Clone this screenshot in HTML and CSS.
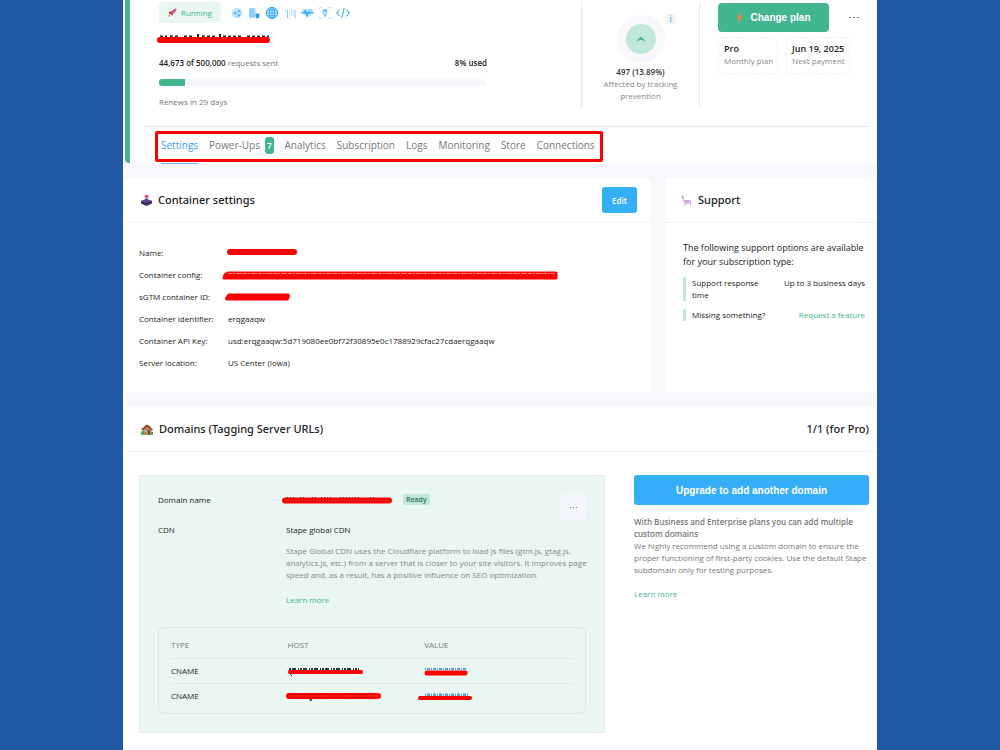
FILE: index.html
```
<!DOCTYPE html>
<html lang="en">
<head>
	<title>Container settings</title>
	<meta charset="utf-8">
	<meta name="viewport" content="width=device-width, initial-scale=1">

	<link rel="stylesheet" href="styles.css">
</head>
<body>

	<div class="page">
		<header class="summary">
			<div class="overview">
				<div class="usage">
					<div class="status-row">
						<span class="status">
							<svg width="9" height="9" viewBox="0 0 9 9"><path d="M2 5L6 1l2.5-.5L8 3 4 7z" fill="#e0567a"/><path d="M1 4l2-1 1 2 1 1-1 2-1-2-2 0z" fill="#d3365f"/><circle cx="6.3" cy="2.6" r=".9" fill="#5b6fb5"/><path d="M0 9l1-3 2 2z" fill="#f0a04b"/></svg>
							Running
						</span>
						<div class="features">
							<svg width="12" height="12" viewBox="0 0 12 12"><circle cx="6" cy="6" r="5.3" fill="#b9e1fc"/><path d="M4 6l4-2M4 6l4 2.500" stroke="#6cc0f8" stroke-width=".6"/><circle cx="4" cy="6" r="1" fill="#37aef8"/><circle cx="8" cy="4" r="1" fill="#37aef8"/><circle cx="8" cy="8.500" r="1" fill="#37aef8"/></svg>
							<svg width="12" height="12" viewBox="0 0 12 12"><rect x="1" y="1" width="6.500" height="10" fill="#a6d9fb"/><path d="M2 3h4M2 5h4M2 7h4M2 9h4" stroke="#4db5f7" stroke-dasharray="1 .6"/><path d="M7.500 7l2-.8 2 .8v2q0 2-2 2.700-2-.7-2-2.700z" fill="#249ff0"/></svg>
							<svg width="14" height="14" viewBox="0 0 14 14"><circle cx="7" cy="7" r="5.600" fill="#c9e8fd" stroke="#2aa3f2"/><ellipse cx="7" cy="7" rx="2.600" ry="5.600" fill="none" stroke="#2aa3f2" stroke-width=".8"/><path d="M7 1.400v11.200M1.400 7h11.200M2.300 4.200h9.400M2.300 9.800h9.400" stroke="#2aa3f2" stroke-width=".8"/></svg>
							<svg width="12" height="12" viewBox="0 0 12 12"><path d="M1.500 2v5M5.500 4v8M9 1v8" stroke="#cbe8fc"/><path d="M3.500 3v8M11 3v8" stroke="#7cc8fa"/><path d="M7.500 3v6" stroke="#b9e1fc"/></svg>
							<svg width="13" height="12" viewBox="0 0 13 12"><path d="M6.500 11L1.500 6Q0 2 3.500 1.500q2 0 3 1.600Q8 1 10 1.600 13 3 11.500 6z" fill="#a4d9fb"/><path d="M0 6h3.500l1-2 1.600 4 1.400-3 1 1H13" fill="none" stroke="#279fee" stroke-width="1.100"/></svg>
							<svg width="12" height="12" viewBox="0 0 12 12"><path d="M.5 2.500V.5h2M9.500 .5h2v2M11.500 9.500v2h-2M2.500 11.500h-2v-2" fill="none" stroke="#b9e1fc"/><ellipse cx="6" cy="6" rx="2.400" ry="3" fill="#a4d9fb"/><path d="M3.400 5Q4 2 6 2.300 8.500 2 8.600 5L7 4H5z" fill="#45b1f6"/><path d="M5 8.500h2v1H5z" fill="#45b1f6"/></svg>
							<svg width="14" height="12" viewBox="0 0 14 12"><path d="M4 2.500L.8 6 4 9.500M10 2.500L13.200 6 10 9.500M8.200 1L5.800 11" fill="none" stroke="#45b1f6" stroke-width="1.100"/></svg>
						</div>
					</div>
					<h1>
						<svg class="mark" width="112" height="12" viewBox="0 0 112 12"><path d="M1 4.500h7M11 4.500h9M25 4.500h10M39 2v5M43 4.500h14M61 2v5M64 4.500h18M88 4.500h22" stroke="#222" stroke-width="2" stroke-dasharray="3 2"/><path d="M1 8h107" stroke="#f00" stroke-width="6" stroke-linecap="round"/></svg>
					</h1>
					<div class="usage-row">
						<span><b>44,673 of 500,000</b> requests sent</span>
						<b>8% used</b>
					</div>
					<div class="progress"><div class="progress-value" style="width: 8%"></div></div>
					<div class="renews">Renews in 29 days</div>
				</div>

				<div class="tracking">
					<div class="ring">
						<div class="ring-inner">
							<svg width="10" height="6" viewBox="0 0 10 6"><path d="M0 5.500L5 .5l5 5-5-1.700z" fill="#43b591"/></svg>
						</div>
						<span class="info">i</span>
					</div>
					<b>497 (13.89%)</b>
					<p>Affected by tracking prevention</p>
				</div>

				<div class="plan">
					<div class="plan-actions">
						<button class="change">
							<svg width="7" height="10" viewBox="0 0 7 10"><path d="M4 0L.5 5.500h2.300L1.700 10 6.500 4H4.200L5 0z" fill="#f6823f"/></svg>
							Change plan
						</button>
						<button class="more" aria-label="More">
							<svg width="11" height="3" viewBox="0 0 11 3"><path d="M1 1h2v1H1zM5 1h2v1H5zM9 1h2v1H9z" fill="#777"/></svg>
						</button>
					</div>
					<div class="plan-facts">
						<div class="fact"><strong>Pro</strong><span>Monthly plan</span></div>
						<div class="fact"><strong>Jun 19, 2025</strong><span>Next payment</span></div>
					</div>
				</div>
			</div>

			<nav class="tabs">
				<a class="active" href="#">Settings</a>
				<a href="#">Power-Ups <span class="count">7</span></a>
				<a href="#">Analytics</a>
				<a href="#">Subscription</a>
				<a href="#">Logs</a>
				<a href="#">Monitoring</a>
				<a href="#">Store</a>
				<a href="#">Connections</a>
				<div class="highlight"></div>
			</nav>
		</header>

		<div class="columns">
			<section class="card">
				<div class="card-head">
					<svg width="11" height="12" viewBox="0 0 11 12"><path d="M5 3h1.300v5H5z" fill="#5a4a7c"/><circle cx="5.600" cy="2.300" r="1.900" fill="#ee5077"/><path d="M0 7l5.500-2L11 7v2.500L5.500 12 0 9.500z" fill="#392f61"/><path d="M0 7l5.500-2L11 7 5.500 9z" fill="#5c4b86"/></svg>
					<h2>Container settings</h2>
					<button class="edit">Edit</button>
				</div>
				<dl class="details">
					<dt>Name:</dt>
					<dd><svg class="mark" width="70" height="12" viewBox="0 0 70 12"><path d="M2 5h64" stroke="#f00" stroke-width="6" stroke-linecap="round"/><path d="M2 5h64" stroke="#a33" stroke-dasharray="3 1 2 2"/></svg></dd>
					<dt>Container config:</dt>
					<dd><svg class="mark" width="330" height="12" viewBox="0 0 330 12"><path d="M-3 6L0 4h328v5H-4z" fill="#f00" stroke="#f00" stroke-width="3" stroke-linejoin="round"/><path d="M0 4.500h327" stroke="#d88" stroke-dasharray="4 1 2 1 6 1"/></svg></dd>
					<dt>sGTM container ID:</dt>
					<dd><svg class="mark" width="64" height="12" viewBox="0 0 64 12"><path d="M1 4.500h59l-1 3H-1z" fill="#f00" stroke="#f00" stroke-width="4" stroke-linejoin="round"/></svg></dd>
					<dt>Container identifier:</dt>
					<dd>erqgaaqw</dd>
					<dt>Container API Key:</dt>
					<dd>usd:erqgaaqw:5d719080ee0bf72f30895e0c1788929cfac27cdaerqgaaqw</dd>
					<dt>Server location:</dt>
					<dd>US Center (Iowa)</dd>
				</dl>
			</section>

			<section class="card support">
				<div class="card-head">
					<svg width="11" height="11" viewBox="0 0 11 11"><path d="M1 0l2 .8V5h6l2 1-1 1v4H9V8.500L4.500 9v2h-1V8L2 6.500 1.500 3 0 2.500z" fill="#dcb9df"/><path d="M0 2l2-.7v1.200z" fill="#e69a85"/><path d="M5 6h3" stroke="#b98ac8"/></svg>
					<h2>Support</h2>
				</div>
				<div class="support-body">
					<p>The following support options are available for your subscription type:</p>
					<div class="option"><span>Support response time</span><span>Up to 3 business days</span></div>
					<div class="option"><span>Missing something?</span><a href="#">Request a feature</a></div>
				</div>
			</section>
		</div>

		<section class="card">
			<div class="card-head">
				<svg width="12" height="11" viewBox="0 0 12 11"><path d="M0 10h12v1H0z" fill="#5fae57"/><path d="M2 5l4-3.500L10.500 5v5.500H2z" fill="#c98358"/><path d="M0 5.500L5.500.5 8 1.500 12 6l-1 .8-4.500-4L1.200 6.500z" fill="#8d4a3c"/><path d="M7 6h2v4.500H7z" fill="#70493e"/><path d="M3.500 6h2v2h-2z" fill="#88c5dd"/><circle cx="1.600" cy="8.500" r="1.600" fill="#3f9f55"/><circle cx="11" cy="9" r="1.300" fill="#3f9f55"/></svg>
				<h2>Domains (Tagging Server URLs)</h2>
				<strong>1/1 (for Pro)</strong>
			</div>
			<div class="domains">
				<div class="domain">
					<dl class="domain-info">
						<dt>Domain name</dt>
						<dd class="domain-name">
							<svg class="mark" width="105" height="12" viewBox="0 0 105 12"><path d="M1 3.500h8M14 3.500h4M26 3.500h4M35 3.500h12M54 3.500h20M84 3.500h5" stroke="#333" stroke-dasharray="1 2"/><path d="M-1 6.500h104" stroke="#f00" stroke-width="6" stroke-linecap="round"/><path d="M0 6.500h103" stroke="#b33" stroke-dasharray="2 1"/></svg>
							<span class="ready">Ready</span>
							<button class="domain-more" aria-label="Domain actions">
								<svg width="9" height="3" viewBox="0 0 9 3"><path d="M1 1h1v1H1zM4 1h1v1H4zM7 1h1v1H7z" fill="#777"/></svg>
							</button>
						</dd>
						<dt>CDN</dt>
						<dd>
							Stape global CDN
							<p>Stape Global CDN uses the Cloudflare platform to load js files (gtm.js, gtag.js, analytics.js, etc.) from a server that is closer to your site visitors. It improves page speed and, as a result, has a positive influence on SEO optimization.</p>
							<a href="#">Learn more</a>
						</dd>
					</dl>
					<div class="records">
						<table>
							<thead>
								<tr><th>TYPE</th><th>HOST</th><th>VALUE</th></tr>
							</thead>
							<tbody>
								<tr>
									<td>CNAME</td>
									<td><svg class="mark" width="75" height="12" viewBox="0 0 75 12"><path d="M1 4h70" stroke="#333" stroke-width="2" stroke-dasharray="2 1 4 2 1 1"/><path d="M2 9l2 2" stroke="#333"/><path d="M2 7h71" stroke="#f00" stroke-width="4" stroke-linecap="round"/></svg></td>
									<td><svg class="mark" width="50" height="12" viewBox="0 0 50 12"><path d="M1 4h41" stroke="#5b9be0" stroke-width="2" stroke-dasharray="1 1 3 1"/><path d="M3 8h38" stroke="#f00" stroke-width="5" stroke-linecap="round"/></svg></td>
								</tr>
								<tr>
									<td>CNAME</td>
									<td><svg class="mark" width="95" height="12" viewBox="0 0 95 12"><path d="M21 9l3 1-2 1" stroke="#333" fill="none"/><path d="M1 6h89" stroke="#f00" stroke-width="6" stroke-linecap="round"/><path d="M2 6h88" stroke="#c44" stroke-dasharray="2 1"/></svg></td>
									<td><svg class="mark" width="50" height="12" viewBox="0 0 50 12"><path d="M1 5h43" stroke="#5b9be0" stroke-width="3" stroke-dasharray="1 1 3 1"/><path d="M-4 8h50" stroke="#f00" stroke-width="4" stroke-linecap="round"/></svg></td>
								</tr>
							</tbody>
						</table>
					</div>
				</div>
				<aside class="upgrade">
					<button>Upgrade to add another domain</button>
					<p><b>With Business and Enterprise plans you can add multiple custom domains</b></p>
					<p>We highly recommend using a custom domain to ensure the proper functioning of first-party cookies. Use the default Stape subdomain only for testing purposes.</p>
					<a href="#">Learn more</a>
				</aside>
			</div>
		</section>
	</div>

</body>
</html>
```
FILE: styles.css
```
* {
	box-sizing: border-box;
}

body {
	margin: 0px;
	padding: 0px 123px;
	background: #2159a6;
	font-family: "Open Sans", "Noto Sans", sans-serif;
	font-size: 8px;
	line-height: 12px;
	color: #222;
}

h1, h2, p, dl, dd {
	margin: 0px;
}

b, strong {
	font-weight: 600;
}

a {
	color: #43b591;
	text-decoration: none;
}

button {
	border: 0px;
	padding: 0px;
	font-family: inherit;
	font-weight: 600;
	color: white;
	cursor: pointer;
}

svg {
	display: block;
	flex: none;
}

.mark {
	overflow: visible;
}

.page {
	min-height: 100vh;
	background: #f7f8fb;
	border-left: 2px solid white;
}

/* summary */

.summary {
	background: white;
	border-left: 5px solid #43b591;
	border-bottom-left-radius: 4px;
	padding: 2px 8px 0px 14px;
}

.overview {
	display: flex;
	padding: 0px 0px 18px 15px;
	border-bottom: 1px solid #e9eaec;
}

.usage {
	flex: 1;
	padding-right: 94px;
}

.status-row {
	display: flex;
	align-items: center;
	gap: 10px;
}

.status {
	display: flex;
	align-items: center;
	gap: 4px;
	height: 21px;
	padding: 0px 9px;
	border-radius: 3px;
	background: #e9f7f2;
	color: #43b591;
}

.features {
	display: flex;
	align-items: center;
	gap: 5px;
}

h1 {
	height: 20px;
	margin-top: 7px;
	padding-top: 2px;
}

.usage-row {
	display: flex;
	justify-content: space-between;
	margin-top: 7px;
	color: #777;
}

.usage-row b {
	color: #222;
}

.progress {
	height: 7px;
	margin: 10px 0px;
	border-radius: 3px;
	background: #f7f8fb;
	overflow: hidden;
}

.progress-value {
	height: 7px;
	background: #43b591;
}

.renews {
	color: #777;
}

.tracking {
	width: 119px;
	padding: 13px 20px 0px;
	border: solid #e9eaec;
	border-width: 0px 1px;
	text-align: center;
	color: #888;
}

.tracking b {
	color: #333;
}

.ring {
	position: relative;
	display: flex;
	align-items: center;
	justify-content: center;
	width: 48px;
	height: 48px;
	margin: 0px auto 3px;
	border-radius: 50%;
	background: #f7f8fb;
}

.ring-inner {
	display: flex;
	align-items: center;
	justify-content: center;
	width: 30px;
	height: 30px;
	border-radius: 50%;
	background: #bfe7da;
}

.info {
	position: absolute;
	top: -2px;
	right: -12px;
	width: 12px;
	height: 12px;
	border-radius: 50%;
	background: #f1f4f8;
	color: #37aef8;
	font-weight: 600;
}

.plan {
	width: 169px;
	padding: 1px 0px 0px 18px;
}

.plan-actions {
	display: flex;
	gap: 19px;
}

.change {
	display: flex;
	align-items: center;
	justify-content: center;
	gap: 7px;
	width: 111px;
	height: 29px;
	border-radius: 4px;
	background: #43b591;
	font-family: "Liberation Sans", sans-serif;
	font-size: 10px;
}

.more {
	background: none;
}

.plan-facts {
	display: flex;
	gap: 8px;
	margin-top: 5px;
}

.fact {
	height: 37px;
	padding: 5px 4px 5px 5px;
	border: 1px dashed #eceef1;
	border-radius: 3px;
	white-space: nowrap;
}

.fact strong {
	display: block;
	font-size: 9px;
}

.fact span {
	display: block;
	color: #888;
}

.tabs {
	position: relative;
	display: flex;
	gap: 11px;
	width: max-content;
	height: 36px;
	padding: 0px 8px 0px 17px;
}

.tabs a {
	display: flex;
	align-items: center;
	gap: 5px;
	color: #777;
	font-size: 10px;
}

.tabs .active {
	color: #37a0f0;
	box-shadow: 0px 1px 0px #5bb9f5;
}

.count {
	padding: 3px 2px 2px;
	border-radius: 3px;
	background: #43b591;
	color: white;
	font-size: 8px;
	font-weight: 600;
}

.highlight {
	position: absolute;
	top: 4px;
	bottom: 1px;
	left: 11px;
	right: 0px;
	border: 3px solid #f00;
	border-radius: 2px;
}

/* cards */

.columns {
	display: grid;
	grid-template-columns: 1fr 212px;
	gap: 14px;
	margin: 15px 0px;
}

.card {
	background: white;
	border-radius: 3px;
}

.card-head {
	display: flex;
	align-items: center;
	gap: 6px;
	height: 45px;
	padding: 0px 14px 0px 16px;
	border-bottom: 1px solid #f1f2f4;
}

.card-head h2, .card-head strong {
	font-family: "Noto Sans", "Open Sans", sans-serif;
	font-size: 11px;
	font-weight: 500;
}

.card-head h2 {
	flex: 1;
}

.card-head strong {
	margin-right: -6px;
}

.edit {
	width: 35px;
	height: 26px;
	border-radius: 3px;
	background: #37aef8;
	font-size: 8px;
}

.details {
	display: grid;
	grid-template-columns: 89px 1fr;
	grid-auto-rows: 22px;
	align-items: center;
	padding: 19px 14px 18px;
}

.support-body {
	padding: 18px 10px 0px 18px;
}

.support-body p {
	margin-bottom: 8px;
	font-size: 9px;
	line-height: 14px;
}

.option {
	display: flex;
	justify-content: space-between;
	margin: 0px 2px 8px 0px;
	padding-left: 6px;
	border-left: 3px solid #bfe7da;
}

.option span:first-child {
	max-width: 80px;
}

/* domains */

.domains {
	display: grid;
	grid-template-columns: 1fr 235px;
	align-items: start;
	gap: 29px;
	padding: 23px 8px 14px 14px;
	border-bottom: 2px solid #f7f8fb;
}

.domain {
	padding: 18px;
	border: 1px solid #dfece8;
	border-radius: 2px;
	background: #e9f6f2;
}

.domain-info {
	display: grid;
	grid-template-columns: 128px 1fr;
	row-gap: 4px;
}

.domain-name {
	display: flex;
	height: 26px;
}

.ready {
	height: 11px;
	margin-left: 12px;
	padding: 0px 3px;
	border-radius: 2px;
	background: #bfe7da;
	color: #2d7560;
	font-size: 7px;
	line-height: 11px;
	font-weight: 600;
}

.domain-more {
	display: flex;
	align-items: center;
	justify-content: center;
	width: 26px;
	height: 26px;
	margin-left: auto;
	border-radius: 3px;
	background: #f3f6fa;
}

.domain-info p {
	margin: 9px -10px 13px 0px;
	color: #888;
}

.records {
	margin-top: 21px;
	padding: 5px 12px;
	border: 1px solid #dae6e3;
	border-radius: 6px;
}

table {
	width: 100%;
	table-layout: fixed;
	border-collapse: collapse;
}

th, td {
	height: 25px;
	padding: 0px;
	text-align: left;
	font-weight: 400;
}

th {
	color: #777;
}

th:first-child {
	width: 29%;
}

th:nth-child(2) {
	width: 34%;
}

tbody tr {
	border-top: 1px solid #dfe8e6;
}

.upgrade {
	color: #777;
}

.upgrade button {
	width: 100%;
	height: 30px;
	margin-bottom: 11px;
	border-radius: 3px;
	background: #37aef8;
	font-family: "Liberation Sans", sans-serif;
	font-size: 10px;
}

.upgrade a {
	display: block;
	margin-top: 12px;
}
```
